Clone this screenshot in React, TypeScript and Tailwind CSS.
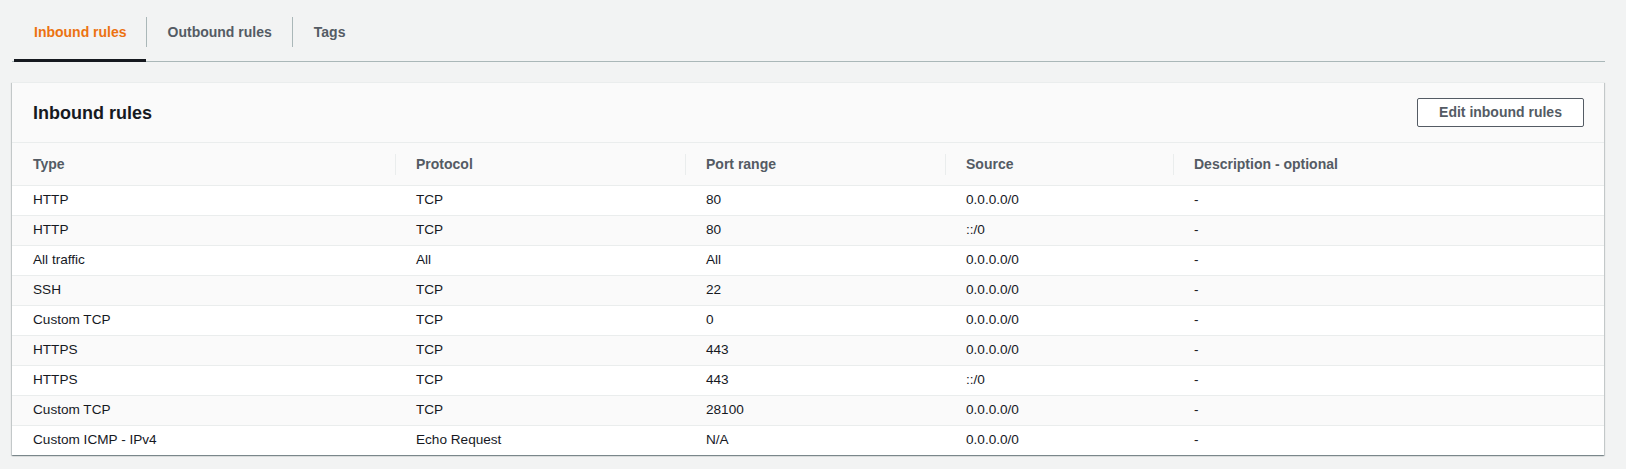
import React from "react";

const rows: [string, string, string, string, string][] = [
  ["HTTP", "TCP", "80", "0.0.0.0/0", "-"],
  ["HTTP", "TCP", "80", "::/0", "-"],
  ["All traffic", "All", "All", "0.0.0.0/0", "-"],
  ["SSH", "TCP", "22", "0.0.0.0/0", "-"],
  ["Custom TCP", "TCP", "0", "0.0.0.0/0", "-"],
  ["HTTPS", "TCP", "443", "0.0.0.0/0", "-"],
  ["HTTPS", "TCP", "443", "::/0", "-"],
  ["Custom TCP", "TCP", "28100", "0.0.0.0/0", "-"],
  ["Custom ICMP - IPv4", "Echo Request", "N/A", "0.0.0.0/0", "-"],
];

const colW = ["w-[383px]", "w-[290px]", "w-[260px]", "w-[228px]", "flex-1"];
const headers = ["Type", "Protocol", "Port range", "Source", "Description - optional"];

export default function App() {
  return (
    <div
      className="min-h-screen bg-[#f2f3f3] pl-[12px] text-[#16191f]"
      style={{ fontFamily: '"Liberation Sans", Arial, sans-serif' }}
    >
      <div className="w-[1593px]">
        {/* Tabs */}
        <div className="flex pt-[3px] pl-[2px] border-b border-[#aab7b8] h-[62px]">
          <div className="relative flex items-center pl-[20px] pr-[19px] text-[14px] font-bold text-[#ec7211]">
            Inbound rules
            <div className="absolute left-0 right-0 bottom-[-1px] h-[3px] bg-[#16191f]" />
          </div>
          <div className="self-center w-px h-[30px] bg-[#aab7b8]" />
          <div className="flex items-center pl-[21px] pr-[20px] text-[14px] font-bold text-[#545b64]">
            Outbound rules
          </div>
          <div className="self-center w-px h-[30px] bg-[#aab7b8]" />
          <div className="flex items-center px-[21px] text-[14px] font-bold text-[#545b64]">
            Tags
          </div>
        </div>

        {/* Panel */}
        <div className="mt-[20px] w-[1592px] bg-white border-t border-[#eaeded] shadow-[0_1px_1px_0_rgba(0,28,36,0.3),1px_1px_1px_0_rgba(0,28,36,0.15),-1px_1px_1px_0_rgba(0,28,36,0.15)]">
          <div className="h-[59px] bg-[#fafafa] flex items-center justify-between pl-[21px] pr-[20px]">
            <div className="text-[18px] font-bold leading-none">Inbound rules</div>
            <button className="h-[29px] w-[167px] border border-[#545b64] rounded-[2px] bg-white text-[14px] font-bold text-[#545b64]">
              Edit inbound rules
            </button>
          </div>
          {/* Header row */}
          <div className="flex h-[43px] bg-[#fafafa] border-t border-[#eaeded]">
            {headers.map((h, i) => (
              <div key={h} className={`${colW[i]} flex items-center`}>
                {i > 0 && <div className="w-px h-[21px] bg-[#eaeded]" />}
                <div className={`${i > 0 ? "pl-[20px]" : "pl-[21px]"} text-[14px] font-bold text-[#545b64]`}>{h}</div>
              </div>
            ))}
          </div>
          {rows.map((r, ri) => (
            <div
              key={ri}
              className={`flex h-[30px] border-t border-[#eaeded] ${ri % 2 === 1 ? "bg-[#fafafa]" : "bg-white"}`}
            >
              {r.map((c, i) => (
                <div key={i} className={`${colW[i]} flex items-center`}>
                  <div className="pl-[21px] text-[13.6px]">{c}</div>
                </div>
              ))}
            </div>
          ))}
        </div>
      </div>
    </div>
  );
}
